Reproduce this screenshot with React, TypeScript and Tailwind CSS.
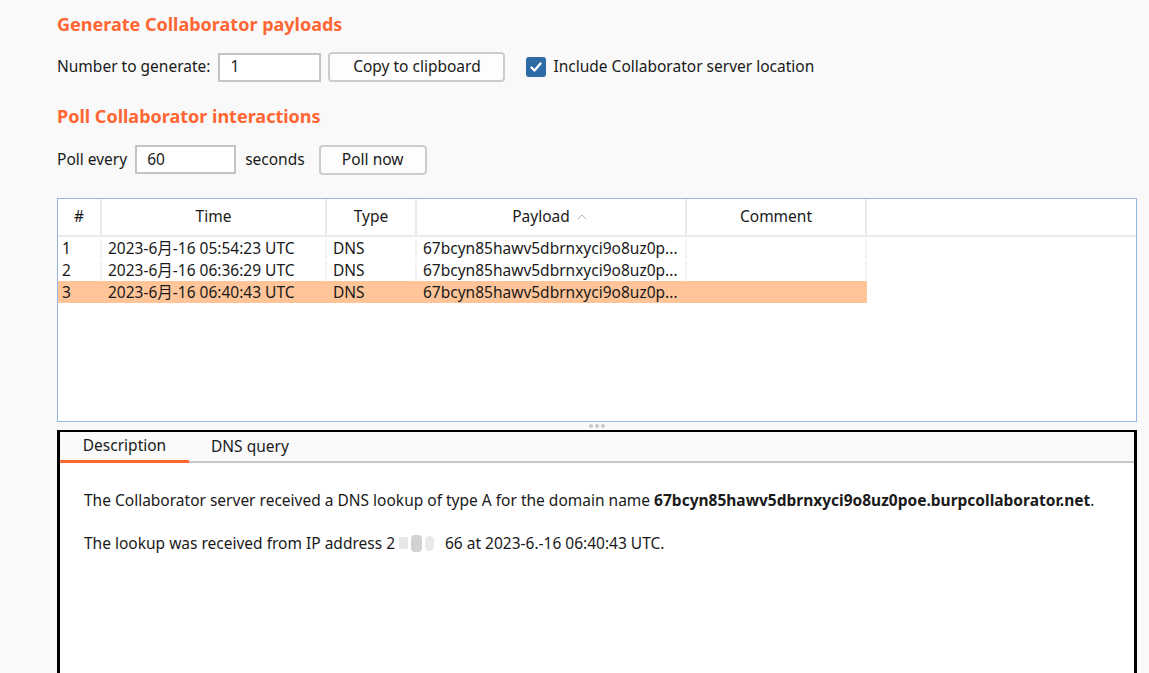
import { ChevronUp } from 'lucide-react'

const font = { fontFamily: '"Noto Sans", "Noto Sans CJK SC", sans-serif' }

interface Interaction {
  id: number
  time: string
  type: string
  payload: string
}

const rows: Interaction[] = [
  { id: 1, time: '2023-6月-16 05:54:23 UTC', type: 'DNS', payload: '67bcyn85hawv5dbrnxyci9o8uz0p...' },
  { id: 2, time: '2023-6月-16 06:36:29 UTC', type: 'DNS', payload: '67bcyn85hawv5dbrnxyci9o8uz0p...' },
  { id: 3, time: '2023-6月-16 06:40:43 UTC', type: 'DNS', payload: '67bcyn85hawv5dbrnxyci9o8uz0p...' },
]

function TextBox({ value, width }: { value: string; width: string }) {
  return (
    <div className={`${width} h-[29px] border-2 border-[#c4c4c4] bg-white flex items-center pl-[10px] text-[#1a1a1a]`}>
      {value}
    </div>
  )
}

function Button({ label, width }: { label: string; width: string }) {
  return (
    <div className={`${width} h-[30px] border-2 border-[#cccccc] rounded-[4px] bg-[#fdfdfd] flex items-center justify-center text-[#1a1a1a]`}>
      {label}
    </div>
  )
}

function Checkbox() {
  return (
    <div className="w-[20px] h-[20px] rounded-[3px] bg-[#2d6aa6] flex items-center justify-center">
      <svg width="14" height="14" viewBox="0 0 14 14">
        <path d="M2.5 7.5 L5.5 10.5 L11.5 3.5" fill="none" stroke="white" strokeWidth="2.4" strokeLinecap="round" strokeLinejoin="round" />
      </svg>
    </div>
  )
}

export default function App() {
  return (
    <div className="w-[1149px] h-[673px] overflow-hidden bg-[#f9f9f9] text-[#1a1a1a] text-[15.5px]" style={font}>
      <div className="pl-[57px] pr-[12px]">
        {/* Generate section */}
        <h2 className="pt-[11px] h-[40px] text-[18px] font-bold text-[#ff6633] leading-[26px]">Generate Collaborator payloads</h2>
        <div className="flex items-center h-[30px] mt-[12px]">
          <span className="mr-[8px]">Number to generate:</span>
          <TextBox value="1" width="w-[103px]" />
          <div className="ml-[7px]">
            <Button label="Copy to clipboard" width="w-[177px]" />
          </div>
          <div className="ml-[21px] flex items-center gap-[7px]">
            <Checkbox />
            <span>Include Collaborator server location</span>
          </div>
        </div>

        {/* Poll section */}
        <h2 className="mt-[21px] h-[26px] text-[18px] font-bold text-[#ff6633] leading-[26px]">Poll Collaborator interactions</h2>
        <div className="flex items-center h-[29px] mt-[16px]">
          <span className="mr-[8px]">Poll every</span>
          <TextBox value="60" width="w-[101px]" />
          <span className="ml-[9px] mr-[14px]">seconds</span>
          <Button label="Poll now" width="w-[108px]" />
        </div>

        {/* Interactions table */}
        <div className="mt-[24px] w-[1080px] h-[224px] border border-[#92b6e0] bg-white">
          <div className="flex h-[38px] border-b-2 border-[#ebebeb]">
            <div className="w-[44px] flex items-center justify-center border-r-2 border-[#ebebeb]">#</div>
            <div className="w-[225px] flex items-center justify-center border-r-2 border-[#ebebeb]">Time</div>
            <div className="w-[90px] flex items-center justify-center border-r-2 border-[#ebebeb]">Type</div>
            <div className="w-[270px] flex items-center justify-center gap-[4px] border-r-2 border-[#ebebeb]">
              Payload
              <ChevronUp size={16} strokeWidth={1.5} className="text-[#b0b0b0]" />
            </div>
            <div className="w-[180px] flex items-center justify-center border-r-2 border-[#ebebeb]">Comment</div>
          </div>
          {rows.map((r) => {
            const selected = r.id === 3
            const line = selected ? 'border-transparent' : 'border-[#f2f2f2]'
            return (
              <div key={r.id} className={`flex h-[22px] w-[809px] items-center pt-[2px] ${selected ? 'bg-[#ffc599]' : ''}`}>
                <div className={`w-[44px] h-full flex items-center pl-[4px] border-r-2 ${line}`}>{r.id}</div>
                <div className={`w-[225px] h-full flex items-center pl-[6px] border-r-2 ${line}`}>{r.time}</div>
                <div className={`w-[90px] h-full flex items-center pl-[6px] border-r-2 ${line}`}>{r.type}</div>
                <div className={`w-[270px] h-full flex items-center pl-[6px] border-r-2 ${line}`}>{r.payload}</div>
                <div className={`w-[180px] h-full border-r-2 ${line}`}></div>
              </div>
            )
          })}
        </div>

        {/* Split handle */}
        <div className="h-[8px] w-[1080px] flex items-center justify-center gap-[2px]">
          <span className="w-[4px] h-[4px] rounded-full bg-[#c8c8c8]" />
          <span className="w-[4px] h-[4px] rounded-full bg-[#c8c8c8]" />
          <span className="w-[4px] h-[4px] rounded-full bg-[#c8c8c8]" />
        </div>

        {/* Detail panel */}
        <div className="w-[1080px] h-[260px] border-t-2 border-x-[3px] border-black bg-white">
          <div className="flex h-[31px] bg-[#fafafa]">
            <div className="w-[129px] flex items-center justify-center border-b-[3px] border-[#ff6633]">Description</div>
            <div className="flex-1 flex items-center pl-[22px] border-b-2 border-[#c8c8c8]">DNS query</div>
          </div>
          <div className="pl-[24px] pt-[27px] leading-[20px]">
            <p>
              The Collaborator server received a DNS lookup of type A for the domain name{' '}
              <span className="font-bold">67bcyn85hawv5dbrnxyci9o8uz0poe.burpcollaborator.net</span>.
            </p>
            <p className="mt-[23px] flex items-center">
              <span>The lookup was received from IP address 2</span>
              <span className="inline-flex items-center w-[50px] h-[20px] gap-[3px] pl-[4px]">
                <span className="w-[9px] h-[12px] bg-[#e6e6e6]" />
                <span className="w-[11px] h-[17px] bg-[#d2d2d2] rounded-sm" />
                <span className="w-[9px] h-[15px] bg-[#e9e9e9] rounded-full" />
              </span>
              <span>66 at 2023-6.-16 06:40:43 UTC.</span>
            </p>
          </div>
        </div>
      </div>
    </div>
  )
}
